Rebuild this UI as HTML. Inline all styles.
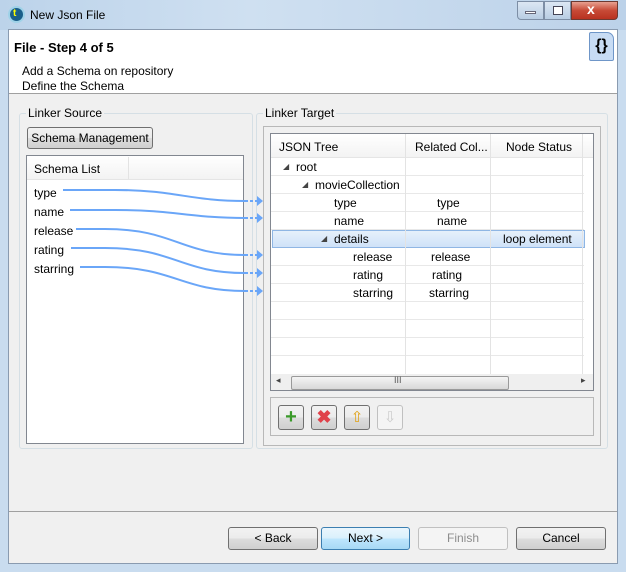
<!DOCTYPE html>
<html><head><style>
*{margin:0;padding:0;box-sizing:border-box}
body{width:626px;height:572px;overflow:hidden;font-family:"Liberation Sans",sans-serif;font-size:12px;color:#000;position:relative;background:#c9dcef}
.a{position:absolute}
.btn{position:absolute;border:1px solid #707070;border-radius:3px;background:linear-gradient(#f2f2f2,#ebebeb 50%,#dddddd 51%,#cfcfcf);text-align:center;line-height:20px}
.row{position:absolute;left:0;width:313px;height:18px;border-bottom:1px solid #e8e8e8}
.t{position:absolute;line-height:18px}
</style></head><body>
<div class="a" style="left:0;top:0;width:626px;height:30px;background:linear-gradient(90deg,#bcd3ea,#cfe0f1 40%,#bcd2e9)"></div>
<div class="a" style="left:8px;top:6px;width:17px;height:17px;border-radius:50%;background:#1a5f8a;border:2px solid #9fd2e8"></div>
<div class="a" style="left:13px;top:8px;font-size:10px;color:#ff0;font-weight:bold">t</div>
<div class="a" style="left:30px;top:8px;font-size:12px">New Json File</div>
<div class="a" style="left:517px;top:1px;width:27px;height:19px;border:1px solid #7d8ea5;border-radius:0 0 0 4px;background:linear-gradient(#dce7f3,#b8cde3)"></div>
<div class="a" style="left:525px;top:11px;width:11px;height:3px;background:#fff;border:1px solid #667"></div>
<div class="a" style="left:544px;top:1px;width:27px;height:19px;border:1px solid #7d8ea5;background:linear-gradient(#dce7f3,#b8cde3)"></div>
<div class="a" style="left:553px;top:6px;width:10px;height:9px;border:1px solid #445;background:#fff"></div>
<div class="a" style="left:571px;top:1px;width:47px;height:19px;border:1px solid #6d3a32;border-radius:0 0 4px 0;background:linear-gradient(#e8a090,#c74a36 50%,#b93220)"></div>
<div class="a" style="left:587px;top:1px;color:#fff;font-weight:bold;font-size:14px">x</div>
<div class="a" style="left:8px;top:29px;width:610px;height:535px;background:#f0f0f0;border:1px solid #8a9bb0"></div>
<div class="a" style="left:9px;top:30px;width:608px;height:64px;background:#fff;border-bottom:1px solid #a0a0a0"></div>
<div class="a" style="left:14px;top:40px;font-size:13px;font-weight:bold">File - Step 4 of 5</div>
<div class="a" style="left:22px;top:64px">Add a Schema on repository</div>
<div class="a" style="left:22px;top:79px">Define the Schema</div>
<div class="a" style="left:589px;top:32px;width:25px;height:29px;background:#c8dcf4;border:1px solid #6f96c8;border-radius:2px 7px 2px 2px;font-size:16px;font-weight:bold;text-align:center;line-height:26px">{}</div>
<!-- Linker source -->
<div class="a" style="left:19px;top:113px;width:234px;height:336px;border:1px solid #d5dfe5;border-radius:3px"></div>
<div class="a" style="left:26px;top:106px;background:#f0f0f0;padding:0 2px">Linker Source</div>
<div class="btn" style="left:27px;top:127px;width:126px;height:22px">Schema Management</div>
<div class="a" style="left:26px;top:155px;width:218px;height:289px;background:#fff;border:1px solid #828790"></div>
<div class="a" style="left:27px;top:156px;width:216px;height:24px;background:linear-gradient(#fff,#f3f3f3);border-bottom:1px solid #e5e5e5"></div>
<div class="a" style="left:128px;top:157px;width:1px;height:22px;background:#e3e3e3"></div>
<div class="a" style="left:34px;top:162px">Schema List</div>
<div class="a" style="left:34px;top:184px;line-height:19px">type<br>name<br>release<br>rating<br>starring</div>
<!-- Linker target -->
<div class="a" style="left:256px;top:113px;width:352px;height:336px;border:1px solid #d5dfe5;border-radius:3px"></div>
<div class="a" style="left:263px;top:106px;background:#f0f0f0;padding:0 2px">Linker Target</div>
<div class="a" style="left:263px;top:126px;width:338px;height:320px;border:1px solid #b8b8b8"></div>
<div class="a" style="left:270px;top:133px;width:324px;height:258px;background:#fff;border:1px solid #828790;overflow:hidden">
 <div class="a" style="left:0;top:0;width:322px;height:24px;background:linear-gradient(#fff,#f3f3f3);border-bottom:1px solid #e5e5e5"></div>
 <div class="a" style="left:8px;top:6px">JSON Tree</div>
 <div class="a" style="left:144px;top:6px">Related Col...</div>
 <div class="a" style="left:235px;top:6px">Node Status</div>
 <div class="row" style="top:24px"></div><div class="row" style="top:42px"></div><div class="row" style="top:60px"></div><div class="row" style="top:78px"></div>
 <div class="row" style="top:96px;background:linear-gradient(#e6f0fb,#cfe2f8);border:1px solid #8fb6e4;left:1px"></div>
 <div class="row" style="top:114px"></div><div class="row" style="top:132px"></div><div class="row" style="top:150px"></div><div class="row" style="top:168px"></div><div class="row" style="top:186px"></div><div class="row" style="top:204px"></div>
 <div class="a" style="left:134px;top:0;width:1px;height:240px;background:#e3e3e3"></div>
 <div class="a" style="left:219px;top:0;width:1px;height:240px;background:#e3e3e3"></div>
 <div class="a" style="left:311px;top:0;width:1px;height:240px;background:#e3e3e3"></div>
 <div class="t" style="left:12px;top:24px;font-size:8px;color:#444">◢</div><div class="t" style="left:25px;top:24px">root</div>
 <div class="t" style="left:31px;top:42px;font-size:8px;color:#444">◢</div><div class="t" style="left:44px;top:42px">movieCollection</div>
 <div class="t" style="left:63px;top:60px">type</div><div class="t" style="left:166px;top:60px">type</div>
 <div class="t" style="left:63px;top:78px">name</div><div class="t" style="left:166px;top:78px">name</div>
 <div class="t" style="left:50px;top:96px;font-size:8px;color:#444">◢</div><div class="t" style="left:63px;top:96px">details</div><div class="t" style="left:232px;top:96px">loop element</div>
 <div class="t" style="left:82px;top:114px">release</div><div class="t" style="left:160px;top:114px">release</div>
 <div class="t" style="left:82px;top:132px">rating</div><div class="t" style="left:161px;top:132px">rating</div>
 <div class="t" style="left:82px;top:150px">starring</div><div class="t" style="left:158px;top:150px">starring</div>
 <div class="a" style="left:0;top:240px;width:322px;height:17px;background:#efefef"></div>
 <div class="a" style="left:20px;top:242px;width:218px;height:14px;border:1px solid #9a9a9a;border-radius:2px;background:linear-gradient(#f4f4f4,#d8d8d8)"></div>
 <div class="a" style="left:123px;top:241px;font-size:9px;color:#555">III</div>
 <div class="a" style="left:5px;top:241px;font-size:9px;color:#444">◂</div>
 <div class="a" style="left:310px;top:241px;font-size:9px;color:#444">▸</div>
</div>
<div class="a" style="left:270px;top:397px;width:324px;height:39px;border:1px solid #b8b8b8"></div>
<div class="btn" style="left:278px;top:405px;width:26px;height:25px;color:#3a9a2a;font-size:20px;font-weight:bold;line-height:22px">+</div>
<div class="btn" style="left:311px;top:405px;width:26px;height:25px;color:#e0424a;font-size:18px;font-weight:bold;line-height:23px">✖</div>
<div class="btn" style="left:344px;top:405px;width:26px;height:25px;color:#e0a010;font-size:15px;line-height:23px">⇧</div>
<div class="btn" style="left:377px;top:405px;width:26px;height:25px;color:#ccc;border-color:#c0c0c0;background:#f4f4f4;font-size:15px;line-height:23px">⇩</div>
<svg class="a" style="left:0;top:0" width="626" height="572">
<g fill="none" stroke="#6aa6f8" stroke-width="2">
<path d="M63 190 H115 C175 190 190 201 245 201"/>
<path d="M70 210 H115 C175 210 190 218 245 218"/>
<path d="M76 229 H105 C175 229 180 255 245 255"/>
<path d="M71 248 H105 C175 248 180 273 245 273"/>
<path d="M80 267 H105 C175 267 180 291 245 291"/>
<g stroke-dasharray="3 2"><path d="M245 201H258M245 218H258M245 255H258M245 273H258M245 291H258"/></g>
</g>
<g fill="#6aa6f8"><path d="M257 196l6 5-6 5z"/><path d="M257 213l6 5-6 5z"/><path d="M257 250l6 5-6 5z"/><path d="M257 268l6 5-6 5z"/><path d="M257 286l6 5-6 5z"/></g>
</svg>
<div class="a" style="left:9px;top:511px;width:608px;height:1px;background:#a0a0a0"></div>
<div class="btn" style="left:228px;top:527px;width:90px;height:23px">&lt; Back</div>
<div class="btn" style="left:321px;top:527px;width:89px;height:23px;border-color:#3c7fb1;background:linear-gradient(#eaf6fd,#d9f0fc 50%,#bee6fd 51%,#a7d9f5)">Next &gt;</div>
<div class="btn" style="left:418px;top:527px;width:90px;height:23px;border-color:#c0c0c0;background:#f4f4f4;color:#8d8d8d">Finish</div>
<div class="btn" style="left:516px;top:527px;width:90px;height:23px">Cancel</div>
</body></html>
